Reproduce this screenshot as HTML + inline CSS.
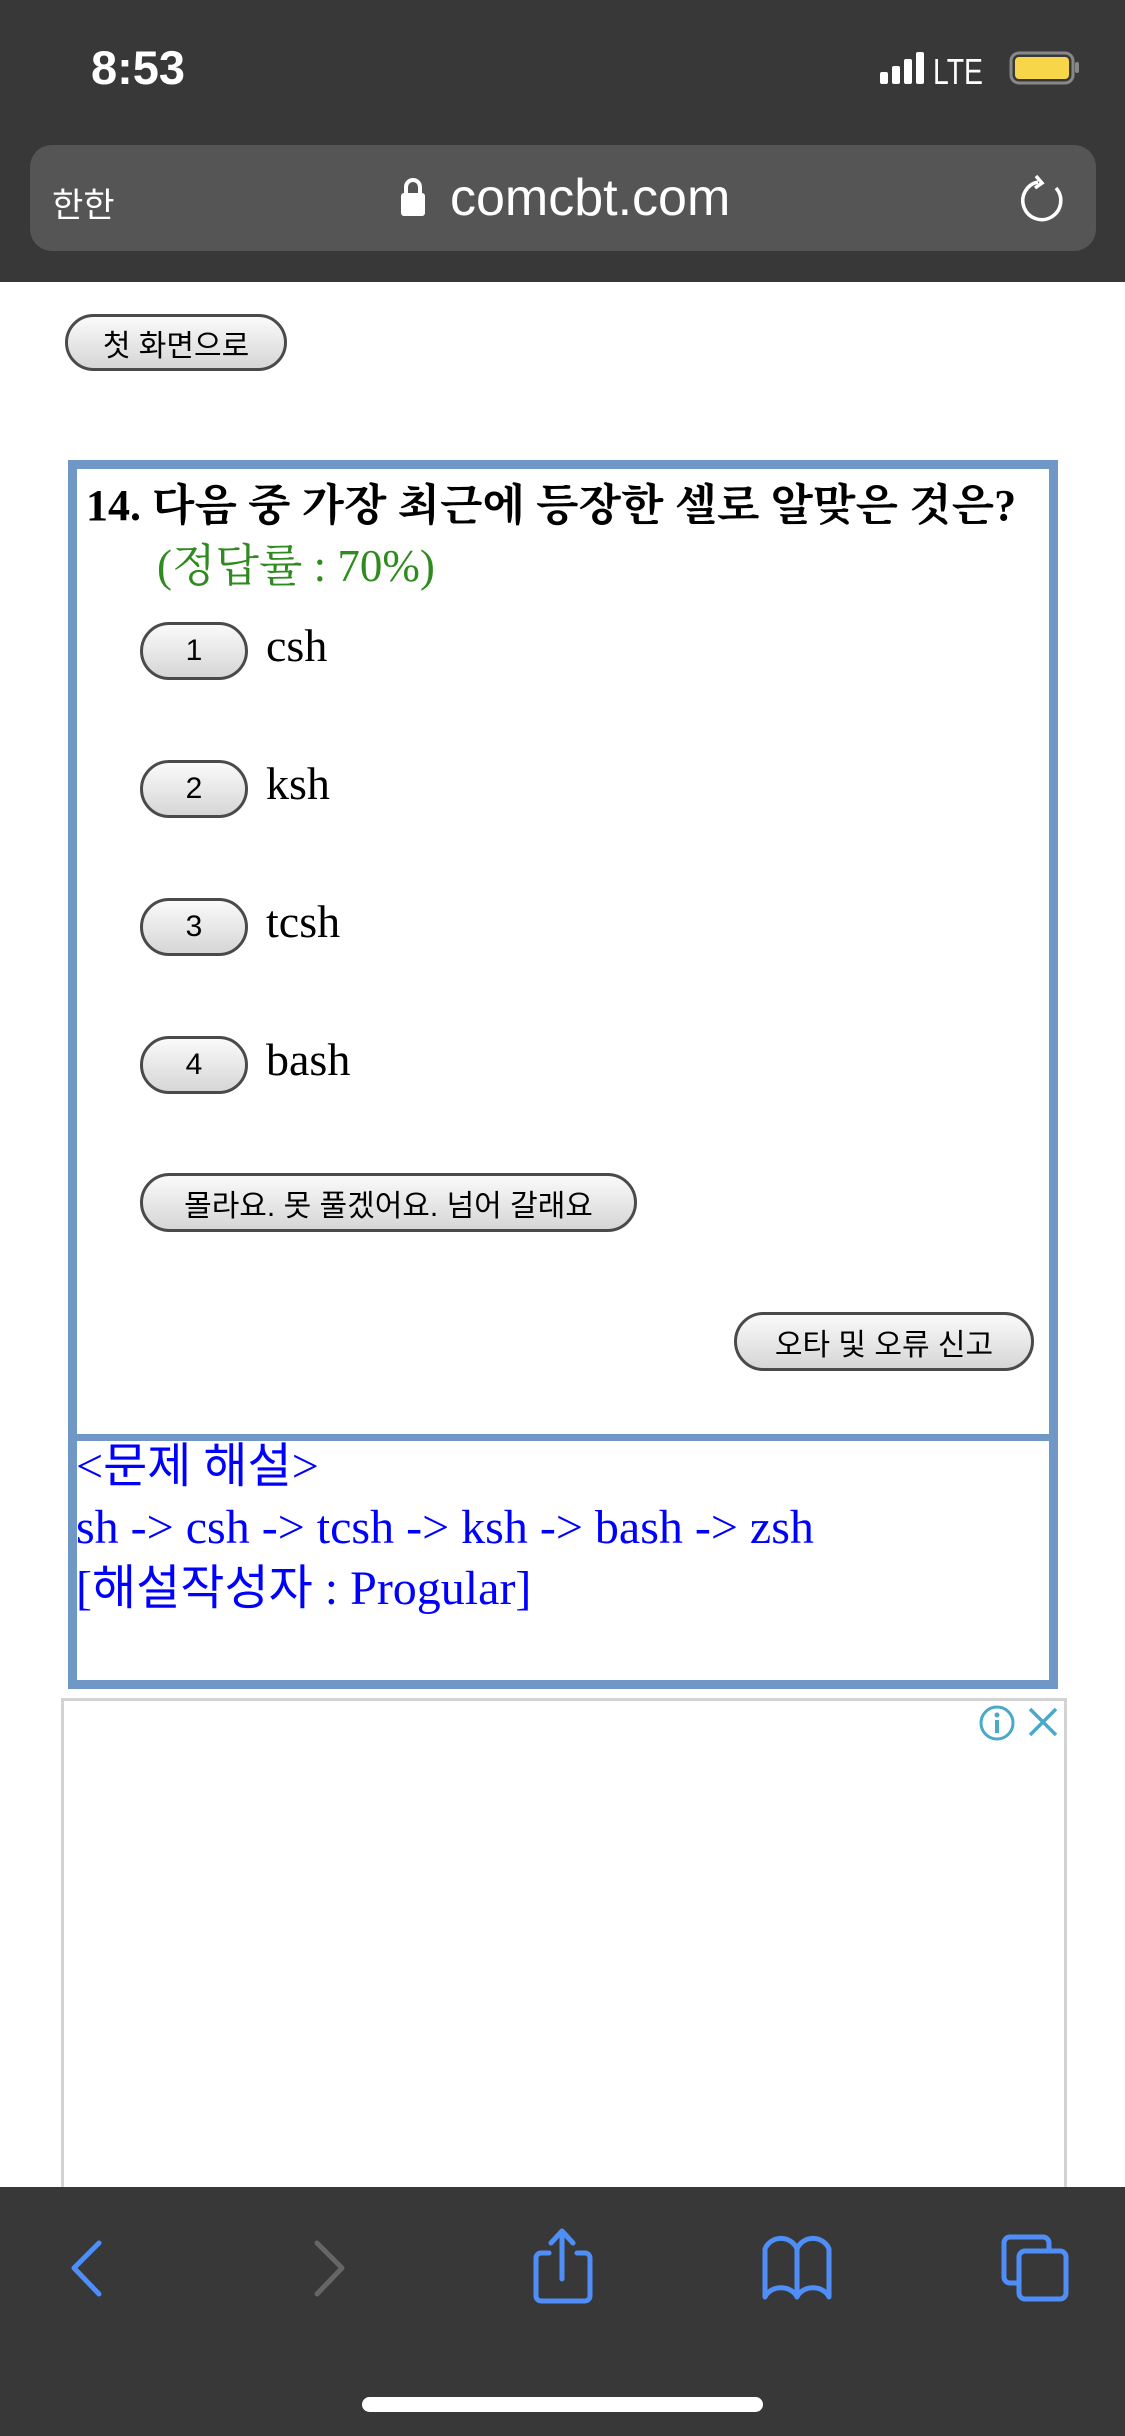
<!DOCTYPE html>
<html><head><meta charset="utf-8"><style>
*{margin:0;padding:0;box-sizing:border-box}
body{width:1125px;height:2436px;position:relative;background:#fff;overflow:hidden;font-family:"Liberation Serif","Noto Serif CJK SC","Noto Sans CJK KR",serif}
.a{position:absolute}
.btn{position:absolute;border:3px solid #4a4a4a;border-radius:30px;background:linear-gradient(#fafafa,#d6d6d6);font-family:"Liberation Sans","Noto Sans CJK KR",sans-serif;color:#000;font-size:30px;display:flex;align-items:center;justify-content:center}
.opt{position:absolute;left:266px;font-size:46px;line-height:46px}
.blue{color:#0000ff;font-size:48px;line-height:61px;font-family:"Liberation Serif","Noto Sans CJK KR",serif}
</style></head><body>
<div class="a" style="left:0;top:0;width:1125px;height:282px;background:#383838"></div>
<div class="a" style="left:91px;top:40px;color:#fff;font:bold 47px 'Liberation Sans',sans-serif">8:53</div>
<svg class="a" style="left:880px;top:50px" width="200" height="40">
<rect x="0" y="22" width="8" height="12" rx="2" fill="#fff"/><rect x="12" y="16" width="8" height="18" rx="2" fill="#fff"/><rect x="24" y="9" width="8" height="25" rx="2" fill="#fff"/><rect x="36" y="2" width="8" height="32" rx="2" fill="#fff"/>
<text x="53" y="34" fill="#fff" font-family="Liberation Sans" font-size="36" textLength="50" lengthAdjust="spacingAndGlyphs">LTE</text>
<rect x="131" y="3" width="62" height="30" rx="8" fill="none" stroke="#888" stroke-width="3"/><rect x="135" y="7" width="54" height="22" rx="4" fill="#f8d64a"/><rect x="195" y="12" width="4" height="11" rx="2" fill="#888"/>
</svg>
<div class="a" style="left:30px;top:145px;width:1066px;height:106px;border-radius:22px;background:#555"></div>
<div class="a" style="left:52px;top:178px;color:#fff;font:34px 'Noto Sans CJK KR',sans-serif">한한</div>
<svg class="a" style="left:400px;top:176px" width="26" height="42"><path d="M6 17V11a7 7 0 0 1 14 0v6" fill="none" stroke="#fff" stroke-width="4"/><rect x="1" y="17" width="24" height="23" rx="3" fill="#fff"/></svg>
<div class="a" style="left:450px;top:168px;color:#fff;font:52px 'Liberation Sans',sans-serif">comcbt.com</div>
<svg class="a" style="left:1018px;top:172px" width="50" height="56"><path d="M20 10 A19 19 0 1 0 38 16" fill="none" stroke="#fff" stroke-width="3.5"/><path d="M18 4l6 7-7 5" fill="none" stroke="#fff" stroke-width="3.5"/></svg>

<div class="btn" style="left:65px;top:314px;width:222px;height:57px">첫 화면으로</div>

<div class="a" style="left:68px;top:460px;width:990px;height:1229px;border:9px solid #7098c6"></div>
<div class="a" style="left:68px;top:1434px;width:990px;height:7px;background:#7098c6"></div>
<div class="a" style="left:86px;top:480px;font-weight:bold;font-size:44px;line-height:52px;color:#000;white-space:nowrap">14. 다음 중 가장 최근에 등장한 셀로 알맞은 것은?</div>
<div class="a" style="left:157px;top:540px;font-size:45px;line-height:52px;color:#2f8a1f">(정답률 : 70%)</div>

<div class="btn" style="left:140px;top:622px;width:108px;height:58px">1</div><div class="opt" style="top:623px">csh</div>
<div class="btn" style="left:140px;top:760px;width:108px;height:58px">2</div><div class="opt" style="top:761px">ksh</div>
<div class="btn" style="left:140px;top:898px;width:108px;height:58px">3</div><div class="opt" style="top:899px">tcsh</div>
<div class="btn" style="left:140px;top:1036px;width:108px;height:58px">4</div><div class="opt" style="top:1037px">bash</div>
<div class="btn" style="left:140px;top:1173px;width:497px;height:59px">몰라요. 못 풀겠어요. 넘어 갈래요</div>
<div class="btn" style="left:734px;top:1312px;width:300px;height:59px">오타 및 오류 신고</div>

<div class="a blue" style="left:76px;top:1436px;white-space:nowrap">&lt;문제 해설&gt;<br>sh -&gt; csh -&gt; tcsh -&gt; ksh -&gt; bash -&gt; zsh<br>[해설작성자 : Progular]</div>

<div class="a" style="left:61px;top:1698px;width:1006px;height:500px;border:3px solid #d3d3d3;border-bottom:none"></div>
<svg class="a" style="left:978px;top:1704px" width="82" height="40"><circle cx="19" cy="19" r="16" fill="none" stroke="#4aa8c8" stroke-width="3"/><circle cx="19" cy="11" r="2.5" fill="#4aa8c8"/><rect x="17" y="16" width="4" height="13" fill="#4aa8c8"/><path d="M52 5l26 26M78 5L52 31" stroke="#4aa8c8" stroke-width="3.5"/></svg>

<div class="a" style="left:0;top:2187px;width:1125px;height:249px;background:#383838"></div>
<svg class="a" style="left:0;top:2187px" width="1125" height="249">
<path d="M99 56L74 81l25 26" fill="none" stroke="#4f8ef7" stroke-width="5" stroke-linecap="round" stroke-linejoin="round"/>
<path d="M317 56l25 25-25 26" fill="none" stroke="#666" stroke-width="5" stroke-linecap="round" stroke-linejoin="round"/>
<path d="M549 66h-8a5 5 0 0 0-5 5v38a5 5 0 0 0 5 5h44a5 5 0 0 0 5-5V71a5 5 0 0 0-5-5h-8M562 92V44M551 56l11-12 11 12" fill="none" stroke="#4f8ef7" stroke-width="5" stroke-linecap="round" stroke-linejoin="round"/>
<path d="M765 62a17 16 0 0 1 32 0v48a17 14 0 0 0-32 0zM797 62a17 16 0 0 1 32 0v48a17 14 0 0 0-32 0z" fill="none" stroke="#4f8ef7" stroke-width="5" stroke-linejoin="round"/>
<rect x="1004" y="50" width="45" height="46" rx="6" fill="none" stroke="#4f8ef7" stroke-width="5"/>
<rect x="1019" y="64" width="47" height="48" rx="6" fill="#383838" stroke="#4f8ef7" stroke-width="5"/>
<rect x="362" y="210" width="401" height="15" rx="7.5" fill="#fff"/>
</svg>
</body></html>
